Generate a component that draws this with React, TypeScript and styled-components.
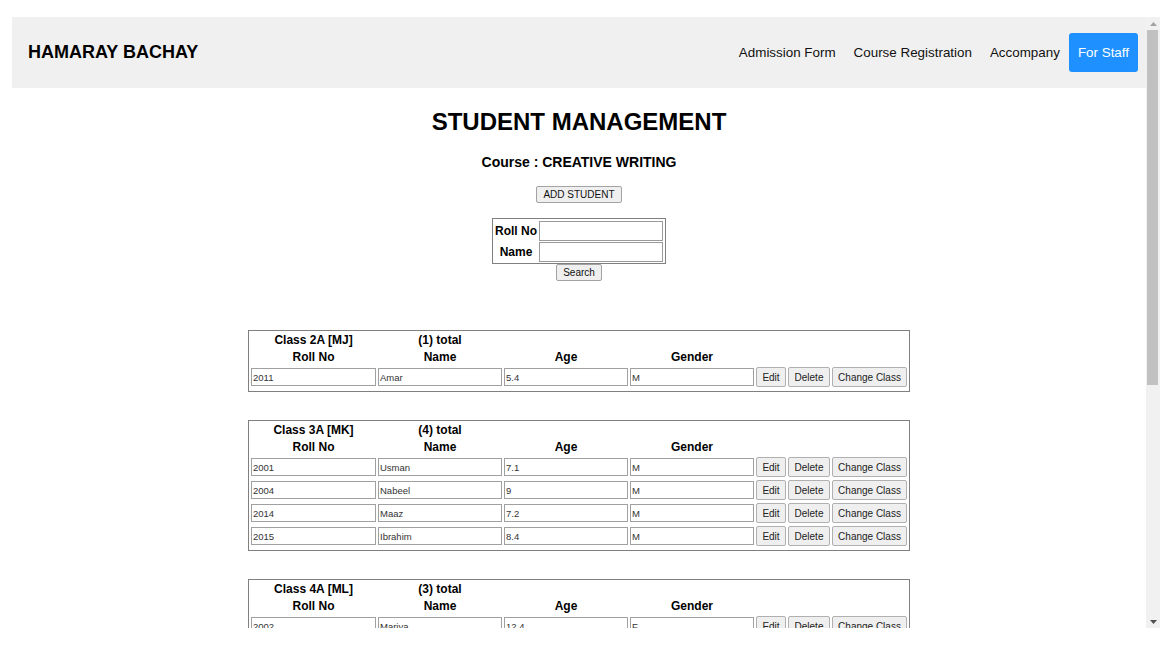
import React from 'react'
import styled, { createGlobalStyle } from 'styled-components'

const GlobalStyle = createGlobalStyle`
  html, body {
    margin: 0;
    padding: 0;
    background: #fff;
  }
  body {
    font-family: "Liberation Sans", Arial, sans-serif;
    color: #000;
  }
  * {
    box-sizing: border-box;
  }
`

type Student = { roll: string; name: string; age: string; gender: string }
type ClassGroup = { title: string; students: Student[] }

const classes: ClassGroup[] = [
  { title: 'Class 2A [MJ]', students: [{ roll: '2011', name: 'Amar', age: '5.4', gender: 'M' }] },
  {
    title: 'Class 3A [MK]',
    students: [
      { roll: '2001', name: 'Usman', age: '7.1', gender: 'M' },
      { roll: '2004', name: 'Nabeel', age: '9', gender: 'M' },
      { roll: '2014', name: 'Maaz', age: '7.2', gender: 'M' },
      { roll: '2015', name: 'Ibrahim', age: '8.4', gender: 'M' },
    ],
  },
  {
    title: 'Class 4A [ML]',
    students: [
      { roll: '2002', name: 'Mariya', age: '12.4', gender: 'F' },
      { roll: '2007', name: 'Hamza', age: '11.8', gender: 'M' },
      { roll: '2012', name: 'Ayesha', age: '12.1', gender: 'F' },
    ],
  },
]

const Screen = styled.div`
  width: 1175px;
  height: 656px;
  padding: 17px 0 0 12px;
  overflow: hidden;
  background: #fff;
`

const Viewport = styled.div`
  width: 1148px;
  height: 611px;
  display: flex;
  overflow: hidden;
`

const Page = styled.div`
  flex: 1;
  min-width: 0;
  overflow: hidden;
  display: flex;
  flex-direction: column;
`

const Header = styled.header`
  height: 71px;
  flex-shrink: 0;
  background: #f0f0f0;
  display: flex;
  align-items: center;
  justify-content: space-between;
  padding: 0 8px 0 16px;
`

const Logo = styled.div`
  font-size: 18px;
  font-weight: bold;
  color: #000;
`

const Nav = styled.nav`
  display: flex;
  align-items: center;
`

const NavLink = styled.a<{ $active?: boolean }>`
  display: flex;
  align-items: center;
  height: 39px;
  padding: 0 9px;
  font-size: 13.4px;
  text-decoration: none;
  border-radius: 3px;
  color: ${({ $active }) => ($active ? '#fff' : '#111')};
  background: ${({ $active }) => ($active ? '#1e90ff' : 'transparent')};
`

const Main = styled.main`
  display: flex;
  flex-direction: column;
  align-items: center;
`

const Title = styled.h1`
  margin: 20px 0 0;
  font-size: 24px;
  line-height: 28px;
  font-weight: bold;
`

const Course = styled.h3`
  margin: 18px 0 0;
  font-size: 14px;
  line-height: 16px;
  font-weight: bold;
`

const PlainButton = styled.button<{ $top?: number }>`
  margin-top: ${({ $top }) => $top ?? 0}px;
  height: 17px;
  padding: 0 6px;
  font-family: "Liberation Sans", Arial, sans-serif;
  font-size: 10px;
  color: #111;
  background: #efefef;
  border: 1px solid #a3a3a3;
  border-radius: 2px;
`

const SearchBox = styled.div`
  margin-top: 15px;
  width: 174px;
  border: 1px solid #808080;
  padding: 1px 2px;
  display: grid;
  grid-template-columns: 42px 124px;
  grid-auto-rows: 21px;
  column-gap: 2px;
  align-items: center;
`

const SearchLabel = styled.label`
  font-size: 12px;
  font-weight: bold;
  text-align: center;
`

const SearchInput = styled.input`
  height: 20px;
  width: 124px;
  border: 1px solid #9a9a9a;
  padding: 0 2px;
  font-size: 11px;
`

const ClassList = styled.div`
  margin-top: 49px;
  display: flex;
  flex-direction: column;
  gap: 28px;
`

const ClassCard = styled.div`
  width: 662px;
  border: 1px solid #808080;
  padding: 2px 2px 4px;
  display: grid;
  grid-template-columns: 125px 124px 124px 124px 30px 42px 75px;
  grid-template-rows: 14px 14px;
  grid-auto-rows: 20px;
  column-gap: 2px;
  row-gap: 3px;
  align-items: center;
`

const HeadCell = styled.div<{ $span?: number }>`
  grid-column: span ${({ $span }) => $span ?? 1};
  font-size: 12px;
  line-height: 14px;
  font-weight: bold;
  text-align: center;
`

const CellInput = styled.input`
  width: 100%;
  height: 18px;
  border: 1px solid #a0a0a0;
  padding: 0 1px;
  font-family: "Liberation Sans", Arial, sans-serif;
  font-size: 9.5px;
  color: #333;
  background: #fff;
`

const RowButton = styled.button`
  height: 20px;
  padding: 0;
  font-family: "Liberation Sans", Arial, sans-serif;
  font-size: 10px;
  color: #222;
  background: #efefef;
  border: 1px solid #b0b0b0;
  border-radius: 2px;
`

const ScrollTrack = styled.div`
  width: 14px;
  flex-shrink: 0;
  background: #f1f1f1;
  display: flex;
  flex-direction: column;
`

const ScrollArrow = styled.div`
  height: 13px;
  display: flex;
  align-items: center;
  justify-content: center;
`

const ScrollThumb = styled.div`
  height: 355px;
  margin: 0 2px 0 1px;
  background: #c1c1c1;
`

const ScrollRest = styled.div`
  flex: 1;
`

const ClassTable: React.FC<{ group: ClassGroup }> = ({ group }) => (
  <ClassCard>
    <HeadCell>{group.title}</HeadCell>
    <HeadCell>({group.students.length}) total</HeadCell>
    <HeadCell $span={5} />
    <HeadCell>Roll No</HeadCell>
    <HeadCell>Name</HeadCell>
    <HeadCell>Age</HeadCell>
    <HeadCell>Gender</HeadCell>
    <HeadCell $span={3} />
    {group.students.map((s) => (
      <React.Fragment key={s.roll}>
        <CellInput defaultValue={s.roll} />
        <CellInput defaultValue={s.name} />
        <CellInput defaultValue={s.age} />
        <CellInput defaultValue={s.gender} />
        <RowButton>Edit</RowButton>
        <RowButton>Delete</RowButton>
        <RowButton>Change Class</RowButton>
      </React.Fragment>
    ))}
  </ClassCard>
)

const App: React.FC = () => {
  return (
    <>
      <GlobalStyle />
      <Screen>
        <Viewport>
          <Page>
            <Header>
              <Logo>HAMARAY BACHAY</Logo>
              <Nav>
                <NavLink>Admission Form</NavLink>
                <NavLink>Course Registration</NavLink>
                <NavLink>Accompany</NavLink>
                <NavLink $active>For Staff</NavLink>
              </Nav>
            </Header>
            <Main>
              <Title>STUDENT MANAGEMENT</Title>
              <Course>Course : CREATIVE WRITING</Course>
              <PlainButton $top={16}>ADD STUDENT</PlainButton>
              <SearchBox>
                <SearchLabel>Roll No</SearchLabel>
                <SearchInput />
                <SearchLabel>Name</SearchLabel>
                <SearchInput />
              </SearchBox>
              <PlainButton>Search</PlainButton>
              <ClassList>
                {classes.map((c) => (
                  <ClassTable key={c.title} group={c} />
                ))}
              </ClassList>
            </Main>
          </Page>
          <ScrollTrack>
            <ScrollArrow>
              <svg width="7" height="4" viewBox="0 0 7 4">
                <path d="M3.5 0 L7 4 L0 4 Z" fill="#a3a3a3" />
              </svg>
            </ScrollArrow>
            <ScrollThumb />
            <ScrollRest />
            <ScrollArrow>
              <svg width="7" height="4" viewBox="0 0 7 4">
                <path d="M0 0 L7 0 L3.5 4 Z" fill="#505050" />
              </svg>
            </ScrollArrow>
          </ScrollTrack>
        </Viewport>
      </Screen>
    </>
  )
}

export default App
